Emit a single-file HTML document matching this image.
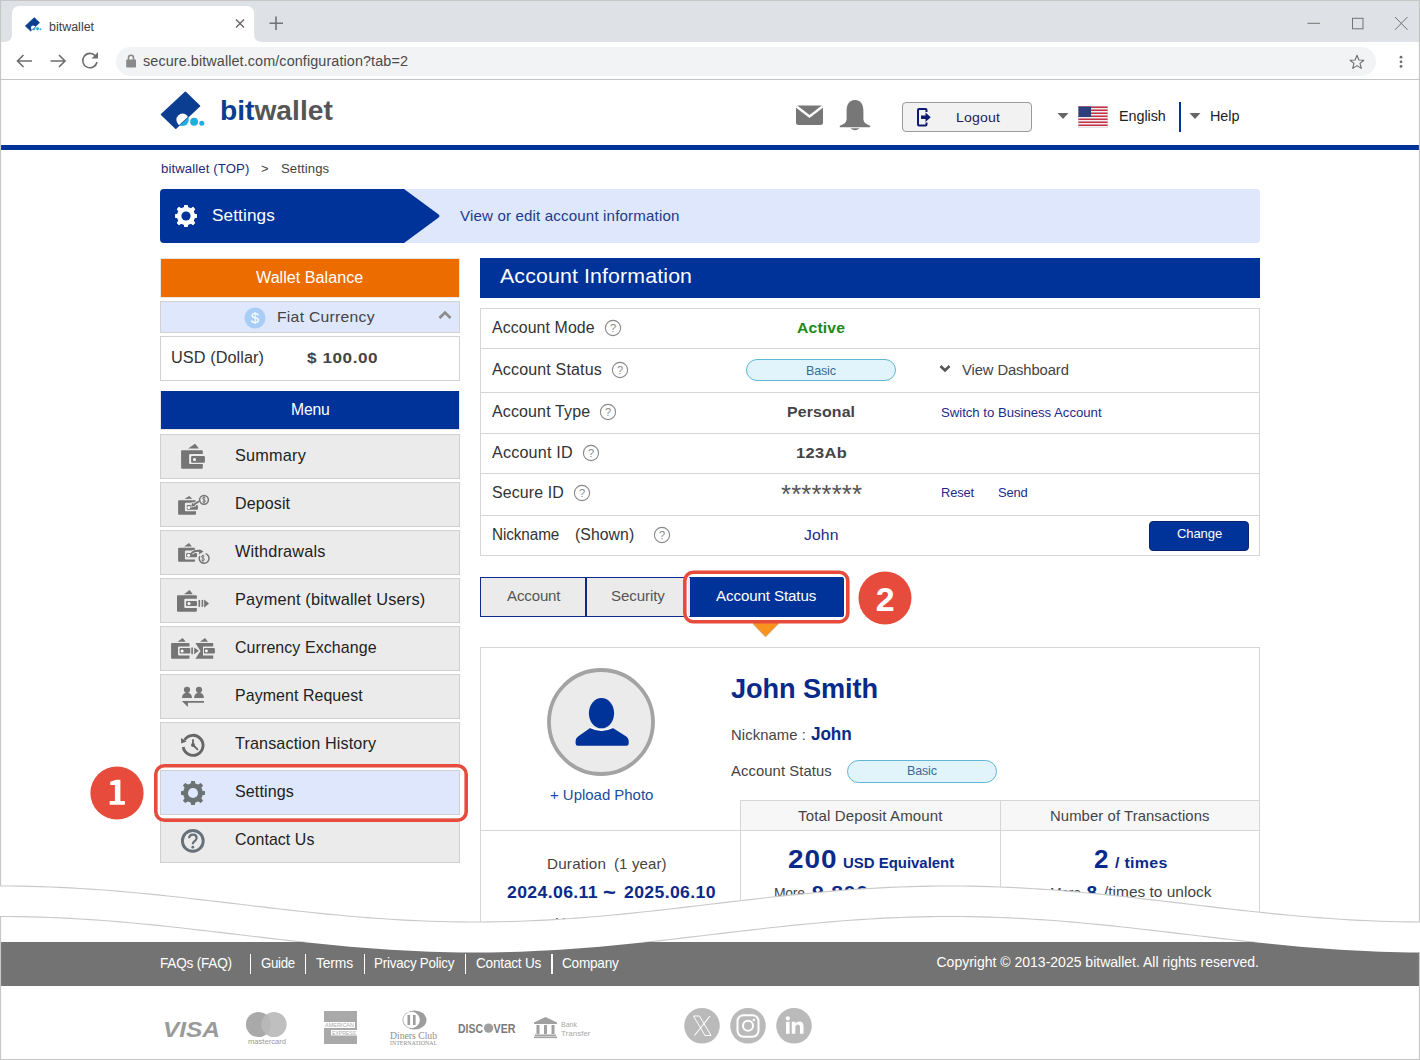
<!DOCTYPE html>
<html><head><meta charset="utf-8"><style>
html,body{margin:0;padding:0;background:#fff;}
#root{position:relative;width:1420px;height:1060px;overflow:hidden;font-family:"Liberation Sans",sans-serif;}
.t{position:absolute;white-space:nowrap;}
.b{position:absolute;box-sizing:border-box;}
</style></head><body><div id="root">
<div class="b" style="left:0px;top:0px;width:1420px;height:42px;background:#dee1e6;"></div>
<svg class="b" style="left:0;top:0" width="280" height="43" viewBox="0 0 280 43"><path d="M4 42 Q12 42 12 34 L12 14 Q12 6 20 6 L246 6 Q254 6 254 14 L254 34 Q254 42 262 42 Z" fill="#fff"/></svg>
<div class="t" style="left:48.50px;top:21.00px;font-size:12.5px;line-height:12.5px;color:#3c4043;transform:scaleX(0.9978);transform-origin:0 0;">bitwallet</div>
<svg class="b" style="left:23.7px;top:15.9px" width="18.75" height="16.50" viewBox="0 0 50 44"><defs><clipPath id="lg0"><path d="M27.4 4.3 L41.5 18 L17.8 40.2 L3.5 26.5 Z"/></clipPath></defs><circle cx="24.6" cy="31.8" r="6.2" fill="#22ade0"/><path d="M27.4 4.3 L41.5 18 L17.8 40.2 L3.5 26.5 Z" fill="#0b3d91" stroke="#0b3d91" stroke-width="1.6" stroke-linejoin="round"/><circle cx="24.6" cy="31.8" r="6.2" fill="#fff" clip-path="url(#lg0)"/><path d="M30.6 29.3 L22.3 37.3" stroke="#22ade0" stroke-width="0.6"/><circle cx="36.1" cy="33.8" r="3.95" fill="#22ade0"/><circle cx="43.8" cy="35.3" r="2.5" fill="#22ade0"/></svg>
<svg class="b" style="left:234px;top:17px" width="12" height="12" viewBox="0 0 12 12"><path d="M2 2.5 L10 10.5 M10 2.5 L2 10.5" stroke="#5f6368" stroke-width="1.3"/></svg>
<svg class="b" style="left:268px;top:15px" width="16" height="16" viewBox="0 0 16 16"><path d="M8 1.5 V15 M1.5 8.3 H15" stroke="#6f7276" stroke-width="1.6"/></svg>
<svg class="b" style="left:1300px;top:10px" width="118" height="28" viewBox="0 0 118 28"><path d="M7.4 13.3 H20" stroke="#737373" stroke-width="1"/><rect x="52.5" y="8.3" width="10.5" height="10.5" fill="none" stroke="#737373" stroke-width="1"/><path d="M95 7 L107.5 19.8 M107.5 7 L95 19.8" stroke="#737373" stroke-width="1"/></svg>
<div class="b" style="left:0px;top:42px;width:1420px;height:37px;background:#fff;"></div>
<div class="b" style="left:0px;top:79px;width:1420px;height:1px;background:#c4c4c4;"></div>
<div class="b" style="left:116px;top:47px;width:1260px;height:29px;background:#f1f3f4;border-radius:14.5px;"></div>
<svg class="b" style="left:14px;top:51px" width="90" height="22" viewBox="0 0 90 22"><g fill="none" stroke="#6e6e6e" stroke-width="1.6"><path d="M3.5 10 H18 M9.5 4 L3.5 10 L9.5 16"/><path d="M36.5 10 H51 M45 4 L51 10 L45 16"/><path d="M81.5 5 A7.2 7.2 0 1 0 83 11"/></g><path d="M84 1 L84 7.5 L77.5 7.5 Z" fill="#6e6e6e"/></svg>
<svg class="b" style="left:124px;top:53px" width="14" height="16" viewBox="0 0 14 16"><path d="M4.5 7 V4.8 A2.5 2.5 0 0 1 9.5 4.8 V7" fill="none" stroke="#8a8a8a" stroke-width="1.6"/><rect x="2.2" y="6.5" width="9.8" height="8" rx="0.8" fill="#8a8a8a"/></svg>
<div class="t" style="left:143.10px;top:54.00px;font-size:14px;line-height:14px;color:#4a4a4a;letter-spacing:0.097px;transform:scaleX(1.0272);transform-origin:0 0;">secure.bitwallet.com/configuration?tab=2</div>
<svg class="b" style="left:1348px;top:53px" width="18" height="18" viewBox="0 0 18 18"><path d="M9 2.2 L10.9 7 L15.9 7.2 L12 10.4 L13.3 15.4 L9 12.6 L4.7 15.4 L6 10.4 L2.1 7.2 L7.1 7 Z" fill="none" stroke="#6e6e6e" stroke-width="1.1" stroke-linejoin="round"/></svg>
<svg class="b" style="left:1396px;top:53px" width="10" height="18" viewBox="0 0 10 18"><circle cx="5" cy="4.2" r="1.4" fill="#6e6e6e"/><circle cx="5" cy="8.8" r="1.4" fill="#6e6e6e"/><circle cx="5" cy="13.4" r="1.4" fill="#6e6e6e"/></svg>
<div class="b" style="left:0px;top:145px;width:1420px;height:5px;background:#003399;"></div>
<svg class="b" style="left:158px;top:88px" width="50.00" height="44.00" viewBox="0 0 50 44"><defs><clipPath id="lg1"><path d="M27.4 4.3 L41.5 18 L17.8 40.2 L3.5 26.5 Z"/></clipPath></defs><circle cx="24.6" cy="31.8" r="6.2" fill="#22ade0"/><path d="M27.4 4.3 L41.5 18 L17.8 40.2 L3.5 26.5 Z" fill="#0b3d91" stroke="#0b3d91" stroke-width="1.6" stroke-linejoin="round"/><circle cx="24.6" cy="31.8" r="6.2" fill="#fff" clip-path="url(#lg1)"/><path d="M30.6 29.3 L22.3 37.3" stroke="#22ade0" stroke-width="0.6"/><circle cx="36.1" cy="33.8" r="3.95" fill="#22ade0"/><circle cx="43.8" cy="35.3" r="2.5" fill="#22ade0"/></svg>
<div class="t" id="logo" style="left:220.3px;top:97px;font-size:27.5px;line-height:27.5px;font-weight:bold;transform:scaleX(1.025);transform-origin:0 0;"><span style="color:#0b3d91">bit</span><span style="color:#555">wallet</span></div>
<svg class="b" style="left:794px;top:104px" width="32" height="24" viewBox="0 0 32 24"><path d="M2 4.2 Q2 1.6 4.5 1.6 L26.5 1.6 Q29 1.6 29 4.2 L29 18.3 Q29 21 26.5 21 L4.5 21 Q2 21 2 18.3 Z" fill="#777"/><path d="M2.5 2.5 L15.5 12.5 L28.5 2.5" fill="none" stroke="#fff" stroke-width="2.4"/></svg>
<svg class="b" style="left:838px;top:98px" width="34" height="34" viewBox="0 0 34 34"><path d="M17 2 C10.5 2 8.6 7.5 8.6 13 L8.6 21.5 Q8.2 25.8 1.8 27.7 L1.8 29.3 L32.2 29.3 L32.2 27.7 Q25.8 25.8 25.4 21.5 L25.4 13 C25.4 7.5 23.5 2 17 2 Z" fill="#777"/><path d="M12.5 30.3 Q17 34 21.5 30.3 Z" fill="#777"/></svg>
<div class="b" style="left:902px;top:102px;width:130px;height:30px;background:#f2f2f2;border:1px solid #9a9a9a;border-radius:4px;"></div>
<svg class="b" style="left:915px;top:107px" width="18" height="20" viewBox="0 0 18 20"><path d="M11.5 5 V3 Q11.5 2 10.5 2 L4 2 Q3 2 3 3 V17.5 Q3 18.5 4 18.5 L10.5 18.5 Q11.5 18.5 11.5 17.5 V15.5" fill="none" stroke="#0d1a6e" stroke-width="2"/><path d="M6 8.5 H10.5 V5.5 L15.7 10.2 L10.5 14.9 V12 H6 Z" fill="#0d1a6e"/></svg>
<div class="t" style="left:955.50px;top:111.00px;font-size:13.5px;line-height:13.5px;color:#1a1a5e;letter-spacing:0.182px;transform:scaleX(1.0400);transform-origin:0 0;">Logout</div>
<svg class="b" style="left:1056px;top:112px" width="14" height="8" viewBox="0 0 14 8"><path d="M1.5 1 H12.5 L7 7 Z" fill="#666"/></svg>
<svg class="b" style="left:1078px;top:106px" width="30" height="22" viewBox="0 0 30 22"><rect x="0" y="0" width="30" height="22" fill="#d8d8d8"/><rect x="0.5" y="0.50" width="29" height="1.55" fill="#c8304a"/><rect x="0.5" y="2.05" width="29" height="1.45" fill="#f6f0f0"/><rect x="0.5" y="3.50" width="29" height="1.55" fill="#c8304a"/><rect x="0.5" y="5.05" width="29" height="1.45" fill="#f6f0f0"/><rect x="0.5" y="6.50" width="29" height="1.55" fill="#c8304a"/><rect x="0.5" y="8.05" width="29" height="1.45" fill="#f6f0f0"/><rect x="0.5" y="9.50" width="29" height="1.55" fill="#c8304a"/><rect x="0.5" y="11.05" width="29" height="1.45" fill="#f6f0f0"/><rect x="0.5" y="12.50" width="29" height="1.55" fill="#c8304a"/><rect x="0.5" y="14.05" width="29" height="1.45" fill="#f6f0f0"/><rect x="0.5" y="15.50" width="29" height="1.55" fill="#c8304a"/><rect x="0.5" y="17.05" width="29" height="1.45" fill="#f6f0f0"/><rect x="0.5" y="18.50" width="29" height="1.55" fill="#c8304a"/><rect x="0.5" y="20.05" width="29" height="1.45" fill="#f6f0f0"/><rect x="0.5" y="0.5" width="12.5" height="10.5" fill="#2d3f7c"/></svg>
<div class="t" style="left:1118.70px;top:109.00px;font-size:14.5px;line-height:14.5px;color:#222;letter-spacing:-0.044px;transform:scaleX(0.9897);transform-origin:0 0;">English</div>
<div class="b" style="left:1179px;top:102px;width:2px;height:30px;background:#003399;"></div>
<svg class="b" style="left:1188px;top:112px" width="14" height="8" viewBox="0 0 14 8"><path d="M1.5 1 H12.5 L7 7 Z" fill="#666"/></svg>
<div class="t" style="left:1210.00px;top:109.00px;font-size:14.5px;line-height:14.5px;color:#222;letter-spacing:-0.035px;transform:scaleX(0.9934);transform-origin:0 0;">Help</div>
<div class="t" style="left:161.00px;top:163.00px;font-size:12.8px;line-height:12.8px;color:#1e2a78;letter-spacing:0.100px;transform:scaleX(1.0303);transform-origin:0 0;">bitwallet (TOP)</div>
<div class="t" style="left:261.00px;top:163.00px;font-size:12.8px;line-height:12.8px;color:#444;">&gt;</div>
<div class="t" style="left:280.80px;top:163.00px;font-size:12.8px;line-height:12.8px;color:#444;letter-spacing:0.097px;transform:scaleX(1.0270);transform-origin:0 0;">Settings</div>
<div class="b" style="left:160px;top:189px;width:1100px;height:54px;background:#dee7fb;border-radius:4px;"></div>
<svg class="b" style="left:160px;top:189px" width="290" height="54" viewBox="0 0 290 54"><path d="M4 0 L244 0 L278 25 Q281 27 278 29 L244 54 L4 54 Q0 54 0 50 L0 4 Q0 0 4 0 Z" fill="#003399"/></svg>
<svg class="b" style="left:175px;top:205px" width="22" height="22" viewBox="0 0 22 22"><path d="M19.43 9.39 L21.94 9.88 L21.94 12.12 L19.43 12.61 L18.10 15.82 L19.53 17.94 L17.94 19.53 L15.82 18.10 L12.61 19.43 L12.12 21.94 L9.88 21.94 L9.39 19.43 L6.18 18.10 L4.06 19.53 L2.47 17.94 L3.90 15.82 L2.57 12.61 L0.06 12.12 L0.06 9.88 L2.57 9.39 L3.90 6.18 L2.47 4.06 L4.06 2.47 L6.18 3.90 L9.39 2.57 L9.88 0.06 L12.12 0.06 L12.61 2.57 L15.82 3.90 L17.94 2.47 L19.53 4.06 L18.10 6.18 Z" fill="#fff" stroke="#fff" stroke-width="1.2" stroke-linejoin="round"/><circle cx="11.0" cy="11.0" r="4.62" fill="#003399"/></svg>
<div class="t" style="left:212.30px;top:208.00px;font-size:16.8px;line-height:16.8px;color:#fff;letter-spacing:0.110px;transform:scaleX(1.0233);transform-origin:0 0;">Settings</div>
<div class="t" style="left:460.00px;top:209.00px;font-size:14.5px;line-height:14.5px;color:#1e3a8a;letter-spacing:0.150px;transform:scaleX(1.0409);transform-origin:0 0;">View or edit account information</div>
<div class="b" style="left:160px;top:258px;width:300px;height:40px;background:#ec6c00;border:1px solid #e6e6e6;"></div>
<div class="t" style="left:256.40px;top:270.00px;font-size:16px;line-height:16px;color:#fff;letter-spacing:0.028px;transform:scaleX(1.0064);transform-origin:0 0;">Wallet Balance</div>
<div class="b" style="left:160px;top:301px;width:300px;height:32px;background:#dee7fb;border:1px solid #d2d2d2;"></div>
<svg class="b" style="left:244px;top:307px" width="22" height="22" viewBox="0 0 22 22"><circle cx="11" cy="11" r="10.5" fill="#a9cdf7"/><text x="11" y="16.2" text-anchor="middle" font-family="Liberation Sans" font-size="15" fill="#fff">$</text></svg>
<div class="t" style="left:276.70px;top:310.00px;font-size:14.8px;line-height:14.8px;color:#444;letter-spacing:0.254px;transform:scaleX(1.0616);transform-origin:0 0;">Fiat Currency</div>
<svg class="b" style="left:438px;top:309px" width="14" height="12" viewBox="0 0 14 12"><path d="M1.5 9 L7 3.5 L12.5 9" fill="none" stroke="#8a8a8a" stroke-width="2.6"/></svg>
<div class="b" style="left:160px;top:336px;width:300px;height:45px;background:#fff;border:1px solid #d2d2d2;"></div>
<div class="t" style="left:171.00px;top:350.00px;font-size:16px;line-height:16px;color:#333;letter-spacing:0.075px;transform:scaleX(1.0167);transform-origin:0 0;">USD (Dollar)</div>
<div class="t" style="left:306.60px;top:350.00px;font-size:15.5px;line-height:15.5px;color:#444;font-weight:bold;letter-spacing:0.512px;transform:scaleX(1.1042);transform-origin:0 0;">$ 100.00</div>
<div class="b" style="left:160px;top:391px;width:300px;height:39px;background:#003399;border:1px solid #e6e6e6;border-top:none;"></div>
<div class="t" style="left:290.80px;top:402.00px;font-size:16px;line-height:16px;color:#fff;letter-spacing:-0.140px;transform:scaleX(0.9803);transform-origin:0 0;">Menu</div>
<div class="b" style="left:160px;top:434px;width:300px;height:45px;background:#ebebeb;border:1px solid #d0d0d0;"></div>
<div class="t" style="left:235.20px;top:448.00px;font-size:15.7px;line-height:15.7px;color:#222;letter-spacing:0.213px;transform:scaleX(1.0347);transform-origin:0 0;">Summary</div>
<div class="b" style="left:160px;top:482px;width:300px;height:45px;background:#ebebeb;border:1px solid #d0d0d0;"></div>
<div class="t" style="left:235.20px;top:496.00px;font-size:15.7px;line-height:15.7px;color:#222;letter-spacing:0.108px;transform:scaleX(1.0223);transform-origin:0 0;">Deposit</div>
<div class="b" style="left:160px;top:530px;width:300px;height:45px;background:#ebebeb;border:1px solid #d0d0d0;"></div>
<div class="t" style="left:235.20px;top:544.00px;font-size:15.7px;line-height:15.7px;color:#222;letter-spacing:0.175px;transform:scaleX(1.0372);transform-origin:0 0;">Withdrawals</div>
<div class="b" style="left:160px;top:578px;width:300px;height:45px;background:#ebebeb;border:1px solid #d0d0d0;"></div>
<div class="t" style="left:235.20px;top:592.00px;font-size:15.7px;line-height:15.7px;color:#222;letter-spacing:0.167px;transform:scaleX(1.0407);transform-origin:0 0;">Payment (bitwallet Users)</div>
<div class="b" style="left:160px;top:626px;width:300px;height:45px;background:#ebebeb;border:1px solid #d0d0d0;"></div>
<div class="t" style="left:235.20px;top:640.00px;font-size:15.7px;line-height:15.7px;color:#222;letter-spacing:0.083px;transform:scaleX(1.0177);transform-origin:0 0;">Currency Exchange</div>
<div class="b" style="left:160px;top:674px;width:300px;height:45px;background:#ebebeb;border:1px solid #d0d0d0;"></div>
<div class="t" style="left:235.20px;top:688.00px;font-size:15.7px;line-height:15.7px;color:#222;letter-spacing:0.075px;transform:scaleX(1.0155);transform-origin:0 0;">Payment Request</div>
<div class="b" style="left:160px;top:722px;width:300px;height:45px;background:#ebebeb;border:1px solid #d0d0d0;"></div>
<div class="t" style="left:235.20px;top:736.00px;font-size:15.7px;line-height:15.7px;color:#222;letter-spacing:0.125px;transform:scaleX(1.0306);transform-origin:0 0;">Transaction History</div>
<div class="b" style="left:160px;top:770px;width:300px;height:45px;background:#dee7fb;border:1px solid #d0d0d0;"></div>
<div class="t" style="left:235.20px;top:784.00px;font-size:15.7px;line-height:15.7px;color:#222;letter-spacing:0.103px;transform:scaleX(1.0232);transform-origin:0 0;">Settings</div>
<div class="b" style="left:160px;top:818px;width:300px;height:45px;background:#ebebeb;border:1px solid #d0d0d0;"></div>
<div class="t" style="left:235.20px;top:832.00px;font-size:15.7px;line-height:15.7px;color:#222;letter-spacing:0.068px;transform:scaleX(1.0145);transform-origin:0 0;">Contact Us</div>
<svg class="b" style="left:170px;top:436px" width="50" height="40" viewBox="0 0 50 40"><path d="M12.1 14.2 H31.799999999999997 Q32.8 14.2 32.8 15.2 V18.1 H20.1 Q19.1 18.1 19.1 19.1 V27.1 Q19.1 28.1 20.1 28.1 H32.8 V31.799999999999997 Q32.8 32.8 31.799999999999997 32.8 H12.1 Q11.1 32.8 11.1 31.799999999999997 V15.2 Q11.1 14.2 12.1 14.2 Z" fill="#757575"/><path d="M18.1 12.6 L25.1 7.7 L28.9 12.6 Z" fill="#757575"/><rect x="21.1" y="20" width="13.799999999999997" height="6.800000000000001" rx="1" fill="#757575"/><circle cx="24.5" cy="23.4" r="1.5" fill="#fff"/></svg>
<svg class="b" style="left:170px;top:484px" width="50" height="40" viewBox="0 0 50 40"><path d="M9.1 16.2 H25 Q26 16.2 26 17.2 V18.7 H15.9 Q14.9 18.7 14.9 19.7 V26.2 Q14.9 27.2 15.9 27.2 H26 V29.8 Q26 30.8 25 30.8 H9.1 Q8.1 30.8 8.1 29.8 V17.2 Q8.1 16.2 9.1 16.2 Z" fill="#757575"/><path d="M14.5 14.9 L19.2 12.1 L22.3 14.7 Z" fill="#757575"/><rect x="16.8" y="21.1" width="11.099999999999998" height="4.699999999999999" rx="1" fill="#757575"/><circle cx="18.9" cy="23.4" r="1.5" fill="#fff"/><path d="M29 17.2 L24 20.6" stroke="#ebebeb" stroke-width="3.6"/><path d="M21 23 L22 18.4 L26 21.8 Z" fill="#757575" stroke="#ebebeb" stroke-width="1"/><path d="M29 17.2 L24 20.6" stroke="#757575" stroke-width="1.8"/><path d="M21.3 22.6 L22.1 18.9 L25.4 21.7 Z" fill="#757575"/><circle cx="34" cy="15.8" r="4.4" fill="none" stroke="#757575" stroke-width="1.5"/><path d="M35.4 14 Q34.8 13.3 34 13.3 Q32.6 13.3 32.6 14.5 Q32.6 15.5 34 15.8 Q35.4 16.1 35.4 17.1 Q35.4 18.3 34 18.3 Q33 18.3 32.5 17.6 M34 12.3 V19.3" fill="none" stroke="#757575" stroke-width="1"/></svg>
<svg class="b" style="left:170px;top:532px" width="50" height="40" viewBox="0 0 50 40"><path d="M9.1 15.8 H24.1 Q25.1 15.8 25.1 16.8 V18.4 H15.9 Q14.9 18.4 14.9 19.4 V26.4 Q14.9 27.4 15.9 27.4 H25.1 V28.8 Q25.1 29.8 24.1 29.8 H9.1 Q8.1 29.8 8.1 28.8 V16.8 Q8.1 15.8 9.1 15.8 Z" fill="#757575"/><path d="M14.2 14.5 L19 10.9 L21.9 14.5 Z" fill="#757575"/><rect x="16.2" y="21" width="10.8" height="4.300000000000001" rx="1" fill="#757575"/><circle cx="18.6" cy="23.2" r="1.5" fill="#fff"/><path d="M21.5 21 Q26.5 17.3 31.8 19.8" fill="none" stroke="#ebebeb" stroke-width="3.6"/><path d="M21.5 21 Q26.5 17.3 31.8 19.8" fill="none" stroke="#757575" stroke-width="1.9"/><path d="M28.8 22.5 L33.5 19.5 L29.5 17.3 Z" fill="#757575"/><path d="M29.8 24 A4.9 4.9 0 1 0 35.5 21.6" fill="none" stroke="#757575" stroke-width="1.5"/><path d="M34.4 24.3 Q33.8 23.6 33 23.6 Q31.6 23.6 31.6 24.8 Q31.6 25.8 33 26.1 Q34.4 26.4 34.4 27.4 Q34.4 28.6 33 28.6 Q32 28.6 31.5 27.9 M33 22.6 V29.6" fill="none" stroke="#757575" stroke-width="1"/></svg>
<svg class="b" style="left:170px;top:580px" width="50" height="40" viewBox="0 0 50 40"><path d="M8 15.3 H25.9 Q26.9 15.3 26.9 16.3 V18.7 H15.3 Q14.3 18.7 14.3 19.7 V27.1 Q14.3 28.1 15.3 28.1 H26.9 V30.7 Q26.9 31.7 25.9 31.7 H8 Q7 31.7 7 30.7 V16.3 Q7 15.3 8 15.3 Z" fill="#757575"/><path d="M14 14.2 L19.6 10 L22.8 14.2 Z" fill="#757575"/><rect x="16" y="21" width="11" height="5" rx="1" fill="#757575"/><circle cx="19" cy="23.6" r="1.5" fill="#fff"/><rect x="28.5" y="20" width="1.6" height="6.8" fill="#757575"/><rect x="31.6" y="20" width="1.6" height="6.8" fill="#757575"/><path d="M34.2 19.6 L39 23.6 L34.2 27.7 Z" fill="#757575"/></svg>
<svg class="b" style="left:165px;top:628px" width="55" height="40" viewBox="0 0 55 40"><path d="M7.1 15 H23.5 Q24.5 15 24.5 16 V18.5 H14 Q13 18.5 13 19.5 V26.5 Q13 27.5 14 27.5 H24.5 V29.8 Q24.5 30.8 23.5 30.8 H7.1 Q6.1 30.8 6.1 29.8 V16 Q6.1 15 7.1 15 Z" fill="#757575"/><path d="M12.5 13.7 L17.7 9.9 L20.7 13.7 Z" fill="#757575"/><rect x="14.6" y="20" width="10.700000000000001" height="5.600000000000001" rx="1" fill="#757575"/><circle cx="17.1" cy="23" r="1.5" fill="#fff"/><rect x="26.3" y="19.5" width="1.6" height="6.7" fill="#757575"/><path d="M29.2 19.4 L33.8 22.8 L29.2 26.2 Z" fill="#757575"/><path d="M30.4 15 H48.2 V18.5 H38 V27.5 H48.2 V30.8 H30.4 L35.5 22.9 Z" fill="#757575"/><path d="M35 13.7 L40 9.9 L43 13.7 Z" fill="#757575"/><rect x="38.9" y="20" width="11" height="5.6" rx="1" fill="#757575"/><circle cx="41.4" cy="23" r="1.4" fill="#fff"/></svg>
<svg class="b" style="left:170px;top:676px" width="50" height="40" viewBox="0 0 50 40"><circle cx="17" cy="13.8" r="3.1" fill="#757575"/><path d="M11.9 21.9 Q12.5 16.8 17 16.6 Q21.5 16.8 22.1 21.9 Z" fill="#757575"/><circle cx="29" cy="13.8" r="3.1" fill="#757575"/><path d="M24 21.9 Q24.6 16.8 29 16.6 Q33.4 16.8 34 21.9 Z" fill="#757575"/><path d="M11.9 25.1 H34 V26.8 H17.9 V30.9 Z" fill="#757575"/></svg>
<svg class="b" style="left:170px;top:724px" width="50" height="40" viewBox="0 0 50 40"><path d="M14.6 16 A10 10 0 1 1 13.2 23" fill="none" stroke="#666" stroke-width="2.9"/><path d="M11 14 L11.2 19.6 L16.6 17.5 Z" fill="#666"/><path d="M23 15.3 V21 L28 25.8" fill="none" stroke="#666" stroke-width="1.8"/><circle cx="23" cy="21" r="2" fill="#666"/></svg>
<svg class="b" style="left:181px;top:781px" width="24" height="24" viewBox="0 0 24 24"><path d="M21.19 10.25 L23.94 10.78 L23.94 13.22 L21.19 13.75 L19.74 17.26 L21.31 19.58 L19.58 21.31 L17.26 19.74 L13.75 21.19 L13.22 23.94 L10.78 23.94 L10.25 21.19 L6.74 19.74 L4.42 21.31 L2.69 19.58 L4.26 17.26 L2.81 13.75 L0.06 13.22 L0.06 10.78 L2.81 10.25 L4.26 6.74 L2.69 4.42 L4.42 2.69 L6.74 4.26 L10.25 2.81 L10.78 0.06 L13.22 0.06 L13.75 2.81 L17.26 4.26 L19.58 2.69 L21.31 4.42 L19.74 6.74 Z" fill="#6b7273" stroke="#6b7273" stroke-width="1.2" stroke-linejoin="round"/><circle cx="12.0" cy="12.0" r="5.04" fill="#dee7fb"/></svg>
<svg class="b" style="left:170px;top:820px" width="50" height="40" viewBox="0 0 50 40"><circle cx="22.8" cy="20.9" r="10.4" fill="none" stroke="#67717a" stroke-width="2.9"/><path d="M19.2 18.3 Q19.2 14.7 22.9 14.7 Q26.6 14.7 26.6 18 Q26.6 20 24.5 21.3 Q22.8 22.4 22.8 24.2" fill="none" stroke="#67717a" stroke-width="2.2"/><circle cx="22.8" cy="27.2" r="1.4" fill="#67717a"/></svg>
<div class="b" style="left:480px;top:258px;width:780px;height:40px;background:#003399;"></div>
<div class="t" style="left:500.00px;top:266.00px;font-size:20.8px;line-height:20.8px;color:#fff;letter-spacing:0.136px;transform:scaleX(1.0243);transform-origin:0 0;">Account Information</div>
<div class="b" style="left:480px;top:308px;width:780px;height:248px;border:1px solid #d6d6d6;"></div>
<div class="b" style="left:481px;top:348px;width:778px;height:1px;background:#d6d6d6;"></div>
<div class="b" style="left:481px;top:392px;width:778px;height:1px;background:#d6d6d6;"></div>
<div class="b" style="left:481px;top:433px;width:778px;height:1px;background:#d6d6d6;"></div>
<div class="b" style="left:481px;top:473px;width:778px;height:1px;background:#d6d6d6;"></div>
<div class="b" style="left:481px;top:515px;width:778px;height:1px;background:#d6d6d6;"></div>
<div class="t" style="left:491.60px;top:320.00px;font-size:15.6px;line-height:15.6px;color:#333;letter-spacing:0.092px;transform:scaleX(1.0187);transform-origin:0 0;">Account Mode</div>
<svg class="b" style="left:604px;top:319px" width="18" height="18" viewBox="0 0 18 18"><circle cx="9" cy="9" r="7.6" fill="none" stroke="#888" stroke-width="1.1"/><text x="9" y="13" text-anchor="middle" font-family="Liberation Sans" font-size="11" fill="#888">?</text></svg>
<div class="t" style="left:491.60px;top:362.00px;font-size:15.6px;line-height:15.6px;color:#333;letter-spacing:0.131px;transform:scaleX(1.0296);transform-origin:0 0;">Account Status</div>
<svg class="b" style="left:611px;top:360.6px" width="18" height="18" viewBox="0 0 18 18"><circle cx="9" cy="9" r="7.6" fill="none" stroke="#888" stroke-width="1.1"/><text x="9" y="13" text-anchor="middle" font-family="Liberation Sans" font-size="11" fill="#888">?</text></svg>
<div class="t" style="left:491.60px;top:404.00px;font-size:15.6px;line-height:15.6px;color:#333;letter-spacing:0.123px;transform:scaleX(1.0262);transform-origin:0 0;">Account Type</div>
<svg class="b" style="left:599px;top:402.7px" width="18" height="18" viewBox="0 0 18 18"><circle cx="9" cy="9" r="7.6" fill="none" stroke="#888" stroke-width="1.1"/><text x="9" y="13" text-anchor="middle" font-family="Liberation Sans" font-size="11" fill="#888">?</text></svg>
<div class="t" style="left:491.60px;top:445.00px;font-size:15.6px;line-height:15.6px;color:#333;letter-spacing:0.167px;transform:scaleX(1.0359);transform-origin:0 0;">Account ID</div>
<svg class="b" style="left:582px;top:444.2px" width="18" height="18" viewBox="0 0 18 18"><circle cx="9" cy="9" r="7.6" fill="none" stroke="#888" stroke-width="1.1"/><text x="9" y="13" text-anchor="middle" font-family="Liberation Sans" font-size="11" fill="#888">?</text></svg>
<div class="t" style="left:491.60px;top:485.00px;font-size:15.6px;line-height:15.6px;color:#333;letter-spacing:0.107px;transform:scaleX(1.0227);transform-origin:0 0;">Secure ID</div>
<svg class="b" style="left:573px;top:483.9px" width="18" height="18" viewBox="0 0 18 18"><circle cx="9" cy="9" r="7.6" fill="none" stroke="#888" stroke-width="1.1"/><text x="9" y="13" text-anchor="middle" font-family="Liberation Sans" font-size="11" fill="#888">?</text></svg>
<div class="t" style="left:491.60px;top:527.00px;font-size:15.6px;line-height:15.6px;color:#333;letter-spacing:-0.098px;transform:scaleX(0.9815);transform-origin:0 0;">Nickname</div>
<div class="t" style="left:575.00px;top:527.00px;font-size:15.6px;line-height:15.6px;color:#333;letter-spacing:0.064px;transform:scaleX(1.0122);transform-origin:0 0;">(Shown)</div>
<svg class="b" style="left:653px;top:525.7px" width="18" height="18" viewBox="0 0 18 18"><circle cx="9" cy="9" r="7.6" fill="none" stroke="#888" stroke-width="1.1"/><text x="9" y="13" text-anchor="middle" font-family="Liberation Sans" font-size="11" fill="#888">?</text></svg>
<div class="t" style="left:797.00px;top:320.00px;font-size:15.2px;line-height:15.2px;color:#1a8a1a;font-weight:bold;letter-spacing:0.168px;transform:scaleX(1.0336);transform-origin:0 0;">Active</div>
<div class="b" style="left:746px;top:359px;width:150px;height:22px;background:#e1f3fb;border:1px solid #5fb7d3;border-radius:11px;box-sizing:border-box;"></div>
<div class="t" style="left:806.00px;top:364.00px;font-size:13px;line-height:13px;color:#3a6a9a;letter-spacing:-0.158px;transform:scaleX(0.9625);transform-origin:0 0;">Basic</div>
<svg class="b" style="left:938px;top:363px" width="14" height="12" viewBox="0 0 14 12"><path d="M2.5 3 L7 7.5 L11.5 3" fill="none" stroke="#555" stroke-width="2.6"/></svg>
<div class="t" style="left:961.50px;top:362.00px;font-size:15.2px;line-height:15.2px;color:#444;letter-spacing:-0.114px;transform:scaleX(0.9748);transform-origin:0 0;">View Dashboard</div>
<div class="t" style="left:787.00px;top:404.00px;font-size:15.5px;line-height:15.5px;color:#444;font-weight:bold;letter-spacing:0.127px;transform:scaleX(1.0250);transform-origin:0 0;">Personal</div>
<div class="t" style="left:941.40px;top:406.00px;font-size:13.3px;line-height:13.3px;color:#1e2a8a;letter-spacing:-0.029px;transform:scaleX(0.9918);transform-origin:0 0;">Switch to Business Account</div>
<div class="t" style="left:796.00px;top:445.00px;font-size:15.5px;line-height:15.5px;color:#444;font-weight:bold;letter-spacing:0.376px;transform:scaleX(1.0582);transform-origin:0 0;">123Ab</div>
<div class="t" style="left:781.00px;top:482.00px;font-size:25px;line-height:25px;color:#555;letter-spacing:0.158px;transform:scaleX(1.0259);transform-origin:0 0;">********</div>
<div class="t" style="left:941.00px;top:486.00px;font-size:13.3px;line-height:13.3px;color:#1e2a8a;letter-spacing:-0.153px;transform:scaleX(0.9667);transform-origin:0 0;">Reset</div>
<div class="t" style="left:998.00px;top:486.00px;font-size:13.3px;line-height:13.3px;color:#1e2a8a;letter-spacing:-0.157px;transform:scaleX(0.9713);transform-origin:0 0;">Send</div>
<div class="t" style="left:803.50px;top:527.00px;font-size:15.5px;line-height:15.5px;color:#1e2a8a;letter-spacing:0.105px;transform:scaleX(1.0172);transform-origin:0 0;">John</div>
<div class="b" style="left:1149px;top:521px;width:100px;height:30px;background:#003399;border:1px solid #0a2470;border-radius:4px;box-sizing:border-box;"></div>
<div class="t" style="left:1176.50px;top:527.00px;font-size:13.3px;line-height:13.3px;color:#fff;letter-spacing:-0.098px;transform:scaleX(0.9803);transform-origin:0 0;">Change</div>
<div class="b" style="left:480px;top:577px;width:364px;height:40px;border:1.5px solid #0d2a8a;box-sizing:border-box;background:#ebebeb;"></div>
<div class="b" style="left:585px;top:577px;width:1.5px;height:40px;background:#0d2a8a;"></div>
<div class="b" style="left:690px;top:577px;width:153px;height:40px;background:#003399;"></div>
<div class="t" style="left:506.50px;top:588.00px;font-size:15.5px;line-height:15.5px;color:#555;letter-spacing:-0.146px;transform:scaleX(0.9705);transform-origin:0 0;">Account</div>
<div class="t" style="left:611.00px;top:588.00px;font-size:15.5px;line-height:15.5px;color:#555;letter-spacing:-0.110px;transform:scaleX(0.9741);transform-origin:0 0;">Security</div>
<div class="t" style="left:716.40px;top:588.00px;font-size:15.5px;line-height:15.5px;color:#fff;letter-spacing:-0.106px;transform:scaleX(0.9750);transform-origin:0 0;">Account Status</div>
<svg class="b" style="left:750px;top:622px" width="32" height="18" viewBox="0 0 32 18"><path d="M2.5 2 L29 2 L15.5 15.5 Z" fill="#c8c8c8"/><path d="M2.5 1 L29 1 L15.5 14.8 Z" fill="#f7931e"/></svg>
<div class="b" style="left:480px;top:647px;width:780px;height:293px;border:1px solid #d6d6d6;border-bottom:none;box-sizing:border-box;"></div>
<svg class="b" style="left:545px;top:666px" width="112" height="112" viewBox="0 0 112 112"><circle cx="56" cy="56" r="52" fill="#ebebeb" stroke="#a3a3a3" stroke-width="3.8"/><ellipse cx="56.5" cy="47.2" rx="12.6" ry="15.1" fill="#003399"/><path d="M45.5 61.8 Q56.5 67 67.5 61.8 L81.3 70.6 Q83.7 72.3 83.7 75 L83.7 77.5 Q83.7 79.7 81.5 79.7 L32.8 79.7 Q30.6 79.7 30.6 77.5 L30.6 75 Q30.6 72.3 33 70.6 Z" fill="#003399"/><path d="M45 61.5 Q56.5 67.2 68 61.5" fill="none" stroke="#fff" stroke-width="1.1"/></svg>
<div class="t" style="left:549.60px;top:787.00px;font-size:15px;line-height:15px;color:#1a4d9e;letter-spacing:-0.012px;transform:scaleX(0.9972);transform-origin:0 0;">+ Upload Photo</div>
<div class="t" style="left:731.20px;top:675.00px;font-size:27.5px;line-height:27.5px;color:#0a2a8a;font-weight:bold;letter-spacing:-0.101px;transform:scaleX(0.9886);transform-origin:0 0;">John Smith</div>
<div class="t" style="left:731.00px;top:728.00px;font-size:14.5px;line-height:14.5px;color:#444;letter-spacing:0.089px;transform:scaleX(1.0204);transform-origin:0 0;">Nickname :</div>
<div class="t" style="left:811.00px;top:726.00px;font-size:17.5px;line-height:17.5px;color:#0a2a8a;font-weight:bold;letter-spacing:-0.128px;transform:scaleX(0.9827);transform-origin:0 0;">John</div>
<div class="t" style="left:731.20px;top:764.00px;font-size:14.5px;line-height:14.5px;color:#444;letter-spacing:0.087px;transform:scaleX(1.0214);transform-origin:0 0;">Account Status</div>
<div class="b" style="left:847px;top:760px;width:150px;height:23px;background:#e1f3fb;border:1px solid #5fb7d3;border-radius:11.5px;box-sizing:border-box;"></div>
<div class="t" style="left:907.00px;top:764.00px;font-size:13px;line-height:13px;color:#3a6a9a;letter-spacing:-0.158px;transform:scaleX(0.9625);transform-origin:0 0;">Basic</div>
<div class="b" style="left:740px;top:800px;width:520px;height:31px;background:#f7f7f7;border:1px solid #d6d6d6;box-sizing:border-box;"></div>
<div class="b" style="left:481px;top:830px;width:778px;height:1px;background:#d6d6d6;"></div>
<div class="b" style="left:740px;top:800px;width:1px;height:140px;background:#d6d6d6;"></div>
<div class="b" style="left:1000px;top:800px;width:1px;height:140px;background:#d6d6d6;"></div>
<div class="t" style="left:798.40px;top:809.00px;font-size:14.6px;line-height:14.6px;color:#444;letter-spacing:0.121px;transform:scaleX(1.0304);transform-origin:0 0;">Total Deposit Amount</div>
<div class="t" style="left:1050.00px;top:809.00px;font-size:14.6px;line-height:14.6px;color:#444;letter-spacing:0.075px;transform:scaleX(1.0187);transform-origin:0 0;">Number of Transactions</div>
<div class="t" style="left:547.00px;top:857.00px;font-size:14.6px;line-height:14.6px;color:#444;letter-spacing:0.190px;transform:scaleX(1.0437);transform-origin:0 0;">Duration</div>
<div class="t" style="left:614.00px;top:857.00px;font-size:14.6px;line-height:14.6px;color:#444;letter-spacing:0.115px;transform:scaleX(1.0293);transform-origin:0 0;">(1 year)</div>
<div class="t" style="left:507.00px;top:884.00px;font-size:16.5px;line-height:16.5px;color:#0a2a8a;font-weight:bold;letter-spacing:0.348px;transform:scaleX(1.0686);transform-origin:0 0;">2024.06.11</div>
<div class="t" style="left:603.00px;top:882.00px;font-size:22px;line-height:22px;color:#0a2a8a;font-weight:bold;">~</div>
<div class="t" style="left:623.70px;top:884.00px;font-size:16.5px;line-height:16.5px;color:#0a2a8a;font-weight:bold;letter-spacing:0.346px;transform:scaleX(1.0675);transform-origin:0 0;">2025.06.10</div>
<div class="t" style="left:788.00px;top:846.00px;font-size:26px;line-height:26px;color:#0a2a8a;font-weight:bold;letter-spacing:0.893px;transform:scaleX(1.0734);transform-origin:0 0;">200</div>
<div class="t" style="left:842.80px;top:855.00px;font-size:15px;line-height:15px;color:#0a2a8a;font-weight:bold;letter-spacing:-0.013px;transform:scaleX(0.9971);transform-origin:0 0;">USD Equivalent</div>
<div class="t" style="left:774.00px;top:886.00px;font-size:14.6px;line-height:14.6px;color:#444;letter-spacing:-0.263px;transform:scaleX(0.9549);transform-origin:0 0;">More</div>
<div class="t" style="left:812.00px;top:883.00px;font-size:19px;line-height:19px;color:#0a2a8a;font-weight:bold;letter-spacing:0.739px;transform:scaleX(1.1087);transform-origin:0 0;">9,800</div>
<div class="t" style="left:876.00px;top:886.00px;font-size:14.6px;line-height:14.6px;color:#444;letter-spacing:-0.098px;transform:scaleX(0.9764);transform-origin:0 0;">USD to unlock</div>
<div class="t" style="left:1094.00px;top:846.00px;font-size:26px;line-height:26px;color:#0a2a8a;font-weight:bold;">2</div>
<div class="t" style="left:1114.60px;top:855.00px;font-size:15px;line-height:15px;color:#0a2a8a;font-weight:bold;letter-spacing:0.286px;transform:scaleX(1.0647);transform-origin:0 0;">/ times</div>
<div class="t" style="left:1050.00px;top:886.00px;font-size:14.6px;line-height:14.6px;color:#444;letter-spacing:-0.263px;transform:scaleX(0.9549);transform-origin:0 0;">More</div>
<div class="t" style="left:1086.60px;top:883.00px;font-size:19px;line-height:19px;color:#0a2a8a;font-weight:bold;">8</div>
<div class="t" style="left:1104.40px;top:884.00px;font-size:15.4px;line-height:15.4px;color:#444;letter-spacing:0.013px;transform:scaleX(1.0033);transform-origin:0 0;">/times to unlock</div>
<div class="t" style="left:555.00px;top:916.00px;font-size:14.6px;line-height:14.6px;color:#444;letter-spacing:0.053px;transform:scaleX(1.0122);transform-origin:0 0;">How to upgrade</div>
<div class="b" style="left:0px;top:942px;width:1420px;height:44px;background:#737373;"></div>
<div class="t" style="left:160.00px;top:956.00px;font-size:14.3px;line-height:14.3px;color:#fff;letter-spacing:-0.227px;transform:scaleX(0.9498);transform-origin:0 0;">FAQs (FAQ)</div>
<div class="t" style="left:260.50px;top:956.00px;font-size:14.3px;line-height:14.3px;color:#fff;letter-spacing:-0.346px;transform:scaleX(0.9302);transform-origin:0 0;">Guide</div>
<div class="t" style="left:315.60px;top:956.00px;font-size:14.3px;line-height:14.3px;color:#fff;letter-spacing:-0.153px;transform:scaleX(0.9703);transform-origin:0 0;">Terms</div>
<div class="t" style="left:373.80px;top:956.00px;font-size:14.3px;line-height:14.3px;color:#fff;letter-spacing:-0.229px;transform:scaleX(0.9358);transform-origin:0 0;">Privacy Policy</div>
<div class="t" style="left:475.60px;top:956.00px;font-size:14.3px;line-height:14.3px;color:#fff;letter-spacing:-0.208px;transform:scaleX(0.9495);transform-origin:0 0;">Contact Us</div>
<div class="t" style="left:562.40px;top:956.00px;font-size:14.3px;line-height:14.3px;color:#fff;letter-spacing:-0.257px;transform:scaleX(0.9521);transform-origin:0 0;">Company</div>
<div class="b" style="left:249.5px;top:954px;width:1.2px;height:20px;background:#fff;"></div>
<div class="b" style="left:305.3px;top:954px;width:1.2px;height:20px;background:#fff;"></div>
<div class="b" style="left:363.5px;top:954px;width:1.2px;height:20px;background:#fff;"></div>
<div class="b" style="left:465.2px;top:954px;width:1.2px;height:20px;background:#fff;"></div>
<div class="b" style="left:551.4px;top:954px;width:1.2px;height:20px;background:#fff;"></div>
<div class="t" style="left:936.50px;top:955.00px;font-size:14px;line-height:14px;color:#fff;">Copyright © 2013-2025 bitwallet. All rights reserved.</div>
<svg class="b" style="left:150px;top:1000px" width="700" height="55" viewBox="0 0 700 55">
<text x="13" y="36.5" font-family="Liberation Sans" font-weight="bold" font-style="italic" font-size="22.5" fill="#9a9a9a" textLength="57" lengthAdjust="spacingAndGlyphs">VISA</text>
<circle cx="108.5" cy="24.5" r="12.6" fill="#a9a9a9"/><circle cx="124" cy="24.5" r="12.6" fill="#bababa" fill-opacity="0.92"/>
<text x="98" y="44" font-family="Liberation Sans" font-size="6.5" fill="#999" textLength="38" lengthAdjust="spacingAndGlyphs">mastercard</text>
<rect x="174" y="11" width="33" height="33" fill="#a9a9a9"/><rect x="174" y="22" width="31" height="6" fill="#fff"/><rect x="181" y="30" width="26" height="5.5" fill="#fff"/>
<text x="175" y="27" font-family="Liberation Sans" font-size="5.5" fill="#a9a9a9" textLength="29" lengthAdjust="spacingAndGlyphs">AMERICAN</text>
<text x="182" y="35" font-family="Liberation Sans" font-size="5.5" fill="#a9a9a9" textLength="24" lengthAdjust="spacingAndGlyphs">EXPRESS</text>
<ellipse cx="264.5" cy="20" rx="12" ry="9.5" fill="#9d9d9d"/><circle cx="261.5" cy="20" r="8.3" fill="#fff"/><rect x="257.5" y="15" width="2.6" height="10" fill="#9d9d9d"/><rect x="263" y="15" width="2.6" height="10" fill="#9d9d9d"/>
<text x="240" y="39" font-family="Liberation Serif" font-size="10.5" fill="#8d8d8d" textLength="47" lengthAdjust="spacingAndGlyphs">Diners Club</text>
<text x="240" y="45" font-family="Liberation Serif" font-size="5.5" fill="#8d8d8d" textLength="47" lengthAdjust="spacingAndGlyphs">INTERNATIONAL</text>
<text x="308" y="32.7" font-family="Liberation Sans" font-weight="bold" font-size="12.5" fill="#7a7a7a" textLength="25" lengthAdjust="spacingAndGlyphs">DISC</text><circle cx="338.6" cy="28.1" r="4.7" fill="#a0a0a0"/><text x="343.5" y="32.7" font-family="Liberation Sans" font-weight="bold" font-size="12.5" fill="#7a7a7a" textLength="22" lengthAdjust="spacingAndGlyphs">VER</text>
<path d="M384 22.5 L395.5 17 L407 22.5 L407 24 L384 24 Z" fill="#a0a0a0"/><rect x="386.5" y="25" width="3" height="9" fill="#a0a0a0"/><rect x="394" y="25" width="3" height="9" fill="#a0a0a0"/><rect x="401.5" y="25" width="3" height="9" fill="#a0a0a0"/><rect x="385" y="34.5" width="21" height="1.5" fill="#a0a0a0"/><rect x="384" y="36.5" width="23" height="1.6" fill="#a0a0a0"/>
<text x="411" y="27" font-family="Liberation Sans" font-size="7" fill="#a8a8a8">Bank</text>
<text x="411" y="36" font-family="Liberation Sans" font-size="7" fill="#a8a8a8" textLength="29.5" lengthAdjust="spacingAndGlyphs">Transfer</text>
<circle cx="552" cy="25.8" r="17.8" fill="#bababa"/><circle cx="598" cy="25.8" r="17.8" fill="#bababa"/><circle cx="644" cy="25.8" r="17.8" fill="#bababa"/>
<path d="M543.5 16 L549.5 16 L561 35.5 L555 35.5 Z" fill="none" stroke="#fff" stroke-width="1"/><path d="M560 16 L544.5 35.5" stroke="#fff" stroke-width="1.1"/>
<rect x="587.5" y="15.2" width="21" height="21.5" rx="6" fill="none" stroke="#fff" stroke-width="2"/><circle cx="598" cy="25.8" r="5" fill="none" stroke="#fff" stroke-width="2"/><circle cx="603.8" cy="20" r="1.2" fill="#fff"/>
<circle cx="637.8" cy="18.3" r="2.1" fill="#fff"/><rect x="636" y="21.8" width="3.6" height="12" fill="#fff"/><path d="M641.8 33.8 V21.8 H645.2 V23.5 Q646.8 21.4 649.5 21.4 Q653.5 21.4 653.5 26.3 V33.8 H650 V27 Q650 24.5 648 24.5 Q645.3 24.5 645.3 27.5 V33.8 Z" fill="#fff"/>
</svg>
<svg class="b" style="left:80px;top:755px;z-index:4" width="400" height="75" viewBox="0 0 400 75"><rect x="75.8" y="10.8" width="310.4" height="54.4" rx="8.5" fill="none" stroke="#fff" stroke-width="3"/><rect x="75.8" y="10.8" width="310.4" height="54.4" rx="8.5" fill="none" stroke="#e64b3b" stroke-width="3.6"/><circle cx="37" cy="38" r="26.6" fill="#e64b3b"/></svg>
<svg class="b" style="left:100px;top:770px;z-index:4" width="40" height="40" viewBox="100 770 40 40"><path d="M109.7 804.8 H124.9 V800.9 H120.4 V779.7 H116.2 L110.2 781.8 V785 H114.9 V800.9 H109.7 Z" fill="#fff"/></svg>
<svg class="b" style="left:675px;top:562px;z-index:4" width="250" height="70" viewBox="0 0 250 70"><rect x="11.3" y="11.8" width="159.8" height="46.8" rx="7.5" fill="none" stroke="#fff" stroke-width="3"/><rect x="9.8" y="10.3" width="163" height="49.4" rx="8.5" fill="none" stroke="#e64b3b" stroke-width="3.6"/><circle cx="210" cy="36" r="26.5" fill="#e64b3b"/></svg>
<div class="t" style="left:875.70px;top:582.00px;font-size:34px;line-height:34px;color:#fff;font-weight:bold;z-index:4;">2</div>
<svg class="b" style="left:0;top:860px;z-index:5" width="1420" height="110" viewBox="0 0 1420 110">
<defs><clipPath id="abv"><rect x="0" y="0" width="1420" height="82"/></clipPath></defs>
<path d="M0 26.00 L10 26.04 L20 26.16 L30 26.35 L40 26.63 L50 26.98 L60 27.40 L70 27.89 L80 28.46 L90 29.10 L100 29.80 L110 30.56 L120 31.38 L130 32.25 L140 33.18 L150 34.15 L160 35.17 L170 36.23 L180 37.32 L190 38.44 L200 39.58 L210 40.74 L220 41.92 L230 43.11 L240 44.30 L250 45.49 L260 46.67 L270 47.84 L280 48.99 L290 50.13 L300 51.23 L310 52.30 L320 53.34 L330 54.34 L340 55.29 L350 56.19 L360 57.04 L370 57.83 L380 58.56 L390 59.23 L400 59.83 L410 60.36 L420 60.82 L430 61.21 L440 61.52 L450 61.75 L460 61.91 L470 61.99 L480 61.99 L490 61.91 L500 61.75 L510 61.52 L520 61.21 L530 60.82 L540 60.36 L550 59.83 L560 59.23 L570 58.56 L580 57.83 L590 57.04 L600 56.19 L610 55.29 L620 54.34 L630 53.34 L640 52.30 L650 51.23 L660 50.13 L670 48.99 L680 47.84 L690 46.67 L700 45.49 L710 44.30 L720 43.11 L730 41.92 L740 40.74 L750 39.58 L760 38.44 L770 37.32 L780 36.23 L790 35.17 L800 34.15 L810 33.18 L820 32.25 L830 31.38 L840 30.56 L850 29.80 L860 29.10 L870 28.46 L880 27.89 L890 27.40 L900 26.98 L910 26.63 L920 26.35 L930 26.16 L940 26.04 L950 26.00 L960 26.04 L970 26.16 L980 26.35 L990 26.63 L1000 26.98 L1010 27.40 L1020 27.89 L1030 28.46 L1040 29.10 L1050 29.80 L1060 30.56 L1070 31.38 L1080 32.25 L1090 33.18 L1100 34.15 L1110 35.17 L1120 36.23 L1130 37.32 L1140 38.44 L1150 39.58 L1160 40.74 L1170 41.92 L1180 43.11 L1190 44.30 L1200 45.49 L1210 46.67 L1220 47.84 L1230 48.99 L1240 50.13 L1250 51.23 L1260 52.30 L1270 53.34 L1280 54.34 L1290 55.29 L1300 56.19 L1310 57.04 L1320 57.83 L1330 58.56 L1340 59.23 L1350 59.83 L1360 60.36 L1370 60.82 L1380 61.21 L1390 61.52 L1400 61.75 L1410 61.91 L1420 61.99 L1420 82 L0 82 Z" fill="#fff"/>
<path d="M0 26.00 L10 26.04 L20 26.16 L30 26.35 L40 26.63 L50 26.98 L60 27.40 L70 27.89 L80 28.46 L90 29.10 L100 29.80 L110 30.56 L120 31.38 L130 32.25 L140 33.18 L150 34.15 L160 35.17 L170 36.23 L180 37.32 L190 38.44 L200 39.58 L210 40.74 L220 41.92 L230 43.11 L240 44.30 L250 45.49 L260 46.67 L270 47.84 L280 48.99 L290 50.13 L300 51.23 L310 52.30 L320 53.34 L330 54.34 L340 55.29 L350 56.19 L360 57.04 L370 57.83 L380 58.56 L390 59.23 L400 59.83 L410 60.36 L420 60.82 L430 61.21 L440 61.52 L450 61.75 L460 61.91 L470 61.99 L480 61.99 L490 61.91 L500 61.75 L510 61.52 L520 61.21 L530 60.82 L540 60.36 L550 59.83 L560 59.23 L570 58.56 L580 57.83 L590 57.04 L600 56.19 L610 55.29 L620 54.34 L630 53.34 L640 52.30 L650 51.23 L660 50.13 L670 48.99 L680 47.84 L690 46.67 L700 45.49 L710 44.30 L720 43.11 L730 41.92 L740 40.74 L750 39.58 L760 38.44 L770 37.32 L780 36.23 L790 35.17 L800 34.15 L810 33.18 L820 32.25 L830 31.38 L840 30.56 L850 29.80 L860 29.10 L870 28.46 L880 27.89 L890 27.40 L900 26.98 L910 26.63 L920 26.35 L930 26.16 L940 26.04 L950 26.00 L960 26.04 L970 26.16 L980 26.35 L990 26.63 L1000 26.98 L1010 27.40 L1020 27.89 L1030 28.46 L1040 29.10 L1050 29.80 L1060 30.56 L1070 31.38 L1080 32.25 L1090 33.18 L1100 34.15 L1110 35.17 L1120 36.23 L1130 37.32 L1140 38.44 L1150 39.58 L1160 40.74 L1170 41.92 L1180 43.11 L1190 44.30 L1200 45.49 L1210 46.67 L1220 47.84 L1230 48.99 L1240 50.13 L1250 51.23 L1260 52.30 L1270 53.34 L1280 54.34 L1290 55.29 L1300 56.19 L1310 57.04 L1320 57.83 L1330 58.56 L1340 59.23 L1350 59.83 L1360 60.36 L1370 60.82 L1380 61.21 L1390 61.52 L1400 61.75 L1410 61.91 L1420 61.99 L1420 92.49 L1410 92.41 L1400 92.25 L1390 92.02 L1380 91.71 L1370 91.32 L1360 90.86 L1350 90.33 L1340 89.73 L1330 89.06 L1320 88.33 L1310 87.54 L1300 86.69 L1290 85.79 L1280 84.84 L1270 83.84 L1260 82.80 L1250 81.73 L1240 80.63 L1230 79.49 L1220 78.34 L1210 77.17 L1200 75.99 L1190 74.80 L1180 73.61 L1170 72.42 L1160 71.24 L1150 70.08 L1140 68.94 L1130 67.82 L1120 66.73 L1110 65.67 L1100 64.65 L1090 63.68 L1080 62.75 L1070 61.88 L1060 61.06 L1050 60.30 L1040 59.60 L1030 58.96 L1020 58.39 L1010 57.90 L1000 57.48 L990 57.13 L980 56.85 L970 56.66 L960 56.54 L950 56.50 L940 56.54 L930 56.66 L920 56.85 L910 57.13 L900 57.48 L890 57.90 L880 58.39 L870 58.96 L860 59.60 L850 60.30 L840 61.06 L830 61.88 L820 62.75 L810 63.68 L800 64.65 L790 65.67 L780 66.73 L770 67.82 L760 68.94 L750 70.08 L740 71.24 L730 72.42 L720 73.61 L710 74.80 L700 75.99 L690 77.17 L680 78.34 L670 79.49 L660 80.63 L650 81.73 L640 82.80 L630 83.84 L620 84.84 L610 85.79 L600 86.69 L590 87.54 L580 88.33 L570 89.06 L560 89.73 L550 90.33 L540 90.86 L530 91.32 L520 91.71 L510 92.02 L500 92.25 L490 92.41 L480 92.49 L470 92.49 L460 92.41 L450 92.25 L440 92.02 L430 91.71 L420 91.32 L410 90.86 L400 90.33 L390 89.73 L380 89.06 L370 88.33 L360 87.54 L350 86.69 L340 85.79 L330 84.84 L320 83.84 L310 82.80 L300 81.73 L290 80.63 L280 79.49 L270 78.34 L260 77.17 L250 75.99 L240 74.80 L230 73.61 L220 72.42 L210 71.24 L200 70.08 L190 68.94 L180 67.82 L170 66.73 L160 65.67 L150 64.65 L140 63.68 L130 62.75 L120 61.88 L110 61.06 L100 60.30 L90 59.60 L80 58.96 L70 58.39 L60 57.90 L50 57.48 L40 57.13 L30 56.85 L20 56.66 L10 56.54 L0 56.50 Z" fill="#fff"/>
<path d="M0 26.00 L10 26.04 L20 26.16 L30 26.35 L40 26.63 L50 26.98 L60 27.40 L70 27.89 L80 28.46 L90 29.10 L100 29.80 L110 30.56 L120 31.38 L130 32.25 L140 33.18 L150 34.15 L160 35.17 L170 36.23 L180 37.32 L190 38.44 L200 39.58 L210 40.74 L220 41.92 L230 43.11 L240 44.30 L250 45.49 L260 46.67 L270 47.84 L280 48.99 L290 50.13 L300 51.23 L310 52.30 L320 53.34 L330 54.34 L340 55.29 L350 56.19 L360 57.04 L370 57.83 L380 58.56 L390 59.23 L400 59.83 L410 60.36 L420 60.82 L430 61.21 L440 61.52 L450 61.75 L460 61.91 L470 61.99 L480 61.99 L490 61.91 L500 61.75 L510 61.52 L520 61.21 L530 60.82 L540 60.36 L550 59.83 L560 59.23 L570 58.56 L580 57.83 L590 57.04 L600 56.19 L610 55.29 L620 54.34 L630 53.34 L640 52.30 L650 51.23 L660 50.13 L670 48.99 L680 47.84 L690 46.67 L700 45.49 L710 44.30 L720 43.11 L730 41.92 L740 40.74 L750 39.58 L760 38.44 L770 37.32 L780 36.23 L790 35.17 L800 34.15 L810 33.18 L820 32.25 L830 31.38 L840 30.56 L850 29.80 L860 29.10 L870 28.46 L880 27.89 L890 27.40 L900 26.98 L910 26.63 L920 26.35 L930 26.16 L940 26.04 L950 26.00 L960 26.04 L970 26.16 L980 26.35 L990 26.63 L1000 26.98 L1010 27.40 L1020 27.89 L1030 28.46 L1040 29.10 L1050 29.80 L1060 30.56 L1070 31.38 L1080 32.25 L1090 33.18 L1100 34.15 L1110 35.17 L1120 36.23 L1130 37.32 L1140 38.44 L1150 39.58 L1160 40.74 L1170 41.92 L1180 43.11 L1190 44.30 L1200 45.49 L1210 46.67 L1220 47.84 L1230 48.99 L1240 50.13 L1250 51.23 L1260 52.30 L1270 53.34 L1280 54.34 L1290 55.29 L1300 56.19 L1310 57.04 L1320 57.83 L1330 58.56 L1340 59.23 L1350 59.83 L1360 60.36 L1370 60.82 L1380 61.21 L1390 61.52 L1400 61.75 L1410 61.91 L1420 61.99" fill="none" stroke="#c9c9c9" stroke-width="1.1"/>
<path d="M0 56.50 L10 56.54 L20 56.66 L30 56.85 L40 57.13 L50 57.48 L60 57.90 L70 58.39 L80 58.96 L90 59.60 L100 60.30 L110 61.06 L120 61.88 L130 62.75 L140 63.68 L150 64.65 L160 65.67 L170 66.73 L180 67.82 L190 68.94 L200 70.08 L210 71.24 L220 72.42 L230 73.61 L240 74.80 L250 75.99 L260 77.17 L270 78.34 L280 79.49 L290 80.63 L300 81.73 L310 82.80 L320 83.84 L330 84.84 L340 85.79 L350 86.69 L360 87.54 L370 88.33 L380 89.06 L390 89.73 L400 90.33 L410 90.86 L420 91.32 L430 91.71 L440 92.02 L450 92.25 L460 92.41 L470 92.49 L480 92.49 L490 92.41 L500 92.25 L510 92.02 L520 91.71 L530 91.32 L540 90.86 L550 90.33 L560 89.73 L570 89.06 L580 88.33 L590 87.54 L600 86.69 L610 85.79 L620 84.84 L630 83.84 L640 82.80 L650 81.73 L660 80.63 L670 79.49 L680 78.34 L690 77.17 L700 75.99 L710 74.80 L720 73.61 L730 72.42 L740 71.24 L750 70.08 L760 68.94 L770 67.82 L780 66.73 L790 65.67 L800 64.65 L810 63.68 L820 62.75 L830 61.88 L840 61.06 L850 60.30 L860 59.60 L870 58.96 L880 58.39 L890 57.90 L900 57.48 L910 57.13 L920 56.85 L930 56.66 L940 56.54 L950 56.50 L960 56.54 L970 56.66 L980 56.85 L990 57.13 L1000 57.48 L1010 57.90 L1020 58.39 L1030 58.96 L1040 59.60 L1050 60.30 L1060 61.06 L1070 61.88 L1080 62.75 L1090 63.68 L1100 64.65 L1110 65.67 L1120 66.73 L1130 67.82 L1140 68.94 L1150 70.08 L1160 71.24 L1170 72.42 L1180 73.61 L1190 74.80 L1200 75.99 L1210 77.17 L1220 78.34 L1230 79.49 L1240 80.63 L1250 81.73 L1260 82.80 L1270 83.84 L1280 84.84 L1290 85.79 L1300 86.69 L1310 87.54 L1320 88.33 L1330 89.06 L1340 89.73 L1350 90.33 L1360 90.86 L1370 91.32 L1380 91.71 L1390 92.02 L1400 92.25 L1410 92.41 L1420 92.49" fill="none" stroke="#c9c9c9" stroke-width="1.1" clip-path="url(#abv)"/>
</svg>
<svg class="b" style="left:0;top:0;z-index:6" width="1420" height="1060" viewBox="0 0 1420 1060">
<path d="M0.5 1060 V916.5 M0.5 886.0 V0.5 H1419.5 V922.0 M1419.5 952.5 V1059.5 H0" fill="none" stroke="#c6c6c6" stroke-width="1.2"/></svg>
</div></body></html>
